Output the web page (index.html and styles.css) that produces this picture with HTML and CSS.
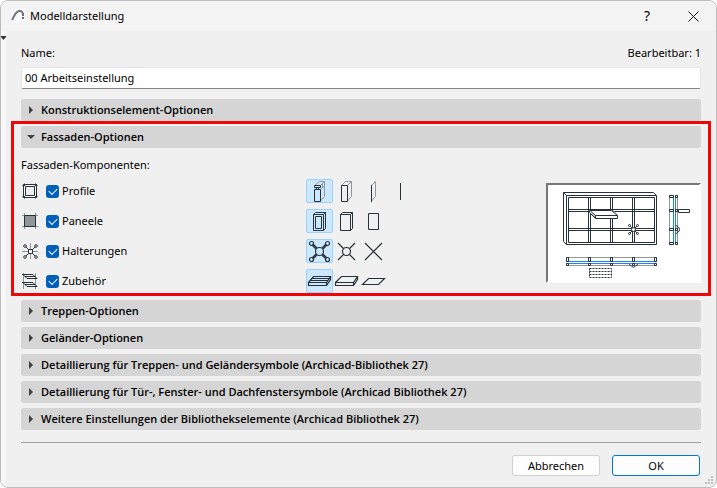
FILE: index.html
```html
<!DOCTYPE html>
<html lang="de">
<head>
    <meta charset="UTF-8">
    <meta name="viewport" content="width=device-width, initial-scale=1.0">
    <title>Modelldarstellung</title>
    <link rel="stylesheet" href="styles.css">
</head>
<body>
    <div class="dialog">
        <header class="titlebar">
            <svg class="app-icon" width="14" height="14" viewBox="0 0 14 14">
                <rect class="tile" width="14" height="14" rx="2"/>
                <path d="M1 11 C3 8 4 3 8 2 Q11 1.500 11.500 4" stroke="#70737d" stroke-width="2"/>
                <path d="M12 4 V7 M12 8 V10" stroke="#6b6e78" stroke-width="2"/>
            </svg>
            <h1>Modelldarstellung</h1>
            <button type="button" class="title-btn help" aria-label="Hilfe">?</button>
            <button type="button" class="title-btn" aria-label="Schließen">
                <svg width="11" height="11" viewBox="0 0 11 11"><path d="M.5 .5 L10.500 10.500 M10.500 .5 L.5 10.500" stroke="#111"/></svg>
            </button>
        </header>

        <div class="body">
            <div class="strip">
                <svg width="5" height="4" viewBox="0 0 5 4"><path class="arrow" d="M0 0 H5 V1 L2.500 4 L0 1 Z"/></svg>
            </div>

            <form class="content">
                <div class="name-row">
                    <label for="name">Name:</label>
                    <span>Bearbeitbar: 1</span>
                </div>
                <input type="text" id="name" class="name-input" value="00 Arbeitseinstellung">

                <details class="panel">
                    <summary>Konstruktionselement-Optionen</summary>
                </details>

                <details class="panel highlight" open>
                    <summary>Fassaden-Optionen</summary>
                    <p class="caption">Fassaden-Komponenten:</p>
                    <div class="facade">
                        <div class="rows">
                            <div class="row">
                                <svg class="part-icon" viewBox="0 0 16 16">
                                    <path class="soft" d="M2.500 0 V16 M13.500 0 V16 M0 2.500 H16 M0 13.500 H16"/>
                                    <path class="paper" d="M1.500 1.500 H14.500 V14.500 H1.500 Z"/>
                                    <path class="face" d="M3.500 3.500 H12.500 V12.500 H3.500 Z"/>
                                    <path d="M1.500 1.500 L3.500 3.500 M14.500 1.500 L12.500 3.500 M1.500 14.500 L3.500 12.500 M14.500 14.500 L12.500 12.500"/>
                                </svg>
                                <label class="check"><input type="checkbox" checked>Profile</label>
                                <div class="levels">
                                    <label class="level"><input type="radio" name="profile" aria-label="Profile detailliert" checked>
                                        <svg viewBox="0 0 27 24">
                                            <path class="soft" d="M8.500 6.500 L13.500 2.500 H18.500 V17.500 L14.500 22 M14.500 6.500 L18.500 2.500 M14.500 10.500 L18.500 7 M16.500 4 V9"/>
                                            <path d="M8.500 6.500 H14.500 V8.500 H8.500 Z M10.500 8.500 V10.500 M12.500 8.500 V10.500 M8.500 10.500 H14.500 V22.500 H8.500 Z"/>
                                        </svg></label>
                                    <label class="level"><input type="radio" name="profile" aria-label="Profile vereinfacht">
                                        <svg viewBox="0 0 27 24">
                                            <path class="soft" d="M8.500 6.500 L12.500 2.500 H18.500 V17.500 L14.500 22 M14.500 6.500 L18.500 2.500"/>
                                            <path d="M8.500 6.500 H14.500 V22.500 H8.500 Z"/>
                                        </svg></label>
                                    <label class="level"><input type="radio" name="profile" aria-label="Profile Fläche">
                                        <svg viewBox="0 0 27 24">
                                            <path class="soft" d="M11.500 6.500 L15.500 2.500 V17.500 L11.500 22"/>
                                            <path d="M11.500 6 V23"/>
                                        </svg></label>
                                    <label class="level"><input type="radio" name="profile" aria-label="Profile Linie">
                                        <svg viewBox="0 0 27 24"><path d="M13.500 4 V21"/></svg></label>
                                </div>
                            </div>

                            <div class="row">
                                <svg class="part-icon" viewBox="0 0 16 16">
                                    <path class="soft" d="M2.500 0 V16 M13.500 0 V16 M0 2.500 H16 M0 13.500 H16"/>
                                    <path class="filled" d="M2.500 2.500 H13.500 V13.500 H2.500 Z"/>
                                </svg>
                                <label class="check"><input type="checkbox" checked>Paneele</label>
                                <div class="levels">
                                    <label class="level"><input type="radio" name="paneele" aria-label="Paneele detailliert" checked>
                                        <svg viewBox="0 0 27 24">
                                            <path d="M7.500 5.500 H17.500 V21.500 H7.500 Z M9.500 7.500 H15.500 V19.500 H9.500 Z M7.500 5.500 L9.500 3.500 H19.500 V19.500 L17.500 21.500 M17.500 5.500 L19.500 3.500"/>
                                        </svg></label>
                                    <label class="level"><input type="radio" name="paneele" aria-label="Paneele vereinfacht">
                                        <svg viewBox="0 0 27 24">
                                            <path d="M7.500 5.500 H17.500 V21.500 H7.500 Z M7.500 5.500 L9.500 3.500 H19.500 V19.500 L17.500 21.500 M17.500 5.500 L19.500 3.500"/>
                                        </svg></label>
                                    <label class="level"><input type="radio" name="paneele" aria-label="Paneele Fläche">
                                        <svg viewBox="0 0 27 24"><path d="M8.500 4.500 H18.500 V20.500 H8.500 Z"/></svg></label>
                                </div>
                            </div>

                            <div class="row">
                                <svg class="part-icon" viewBox="0 0 16 16">
                                    <path class="soft" d="M8.500 0 V16 M0 8.500 H16"/>
                                    <path d="M3.500 3.500 L13.500 13.500 M13.500 3.500 L3.500 13.500"/>
                                    <path class="paper" d="M6.500 6.500 H10.500 V10.500 H6.500 Z"/>
                                    <g class="paper"><circle cx="3" cy="3" r="1.300"/><circle cx="14" cy="3" r="1.300"/><circle cx="3" cy="14" r="1.300"/><circle cx="14" cy="14" r="1.300"/></g>
                                </svg>
                                <label class="check"><input type="checkbox" checked>Halterungen</label>
                                <div class="levels">
                                    <label class="level"><input type="radio" name="halter" aria-label="Halterungen detailliert" checked>
                                        <svg class="bold" viewBox="0 0 27 24">
                                            <path d="M6 6 L10 10 M7 5 L11 9 M21 6 L17 10 M20 5 L16 9 M6 19 L10 15 M7 20 L11 16 M21 19 L17 15 M20 20 L16 16"/>
                                            <circle cx="13.500" cy="12.500" r="4"/>
                                            <circle cx="5.500" cy="4.500" r="2"/><circle cx="21.500" cy="4.500" r="2"/><circle cx="5.500" cy="20.500" r="2"/><circle cx="21.500" cy="20.500" r="2"/>
                                        </svg></label>
                                    <label class="level"><input type="radio" name="halter" aria-label="Halterungen vereinfacht">
                                        <svg class="bold" viewBox="0 0 27 24">
                                            <path d="M5 4 L11 10 M22 4 L16 10 M5 21 L11 15 M22 21 L16 15"/>
                                            <circle cx="13.500" cy="12.500" r="4"/>
                                        </svg></label>
                                    <label class="level"><input type="radio" name="halter" aria-label="Halterungen Linien">
                                        <svg class="bold" viewBox="0 0 27 24"><path d="M5 4 L22 21 M22 4 L5 21"/></svg></label>
                                </div>
                            </div>

                            <div class="row">
                                <svg class="part-icon" viewBox="0 0 16 16">
                                    <path class="soft" d="M1.500 0 V16 M13.500 0 V16"/>
                                    <path d="M0 1.500 H11 L15 5.500 H5 L1 1.500 M3 3.500 H13 M0 9.500 H11 L15 13.500 H5 L1 9.500 M3 11.500 H13"/>
                                </svg>
                                <label class="check"><input type="checkbox" checked>Zubehör</label>
                                <div class="levels">
                                    <label class="level"><input type="radio" name="zubehoer" aria-label="Zubehör detailliert" checked>
                                        <svg class="bold" viewBox="0 0 27 24">
                                            <path d="M2.500 13.500 H20.500 V16.500 H2.500 Z M2.500 13.500 L7.500 7.500 H24.500 L20.500 13.500 M24.500 7.500 V10.500 L20.500 16.500 M6 9.500 H22.500 M4 11.500 H21.500"/>
                                        </svg></label>
                                    <label class="level"><input type="radio" name="zubehoer" aria-label="Zubehör vereinfacht">
                                        <svg class="bold" viewBox="0 0 27 24">
                                            <path d="M2.500 13.500 H20.500 V16.500 H2.500 Z M2.500 13.500 L8.500 7.500 H24.500 L20.500 13.500 M24.500 7.500 V10.500 L20.500 16.500"/>
                                        </svg></label>
                                    <label class="level"><input type="radio" name="zubehoer" aria-label="Zubehör Fläche">
                                        <svg class="bold" viewBox="0 0 27 24"><path d="M2.500 15.500 L8.500 9.500 H24.500 L18.500 15.500 Z"/></svg></label>
                                </div>
                            </div>
                        </div>

                        <div class="preview">
                            <svg width="151" height="96" viewBox="0 0 151 96">
                                <!-- elevation -->
                                <path d="M18.500 10.500 L15.500 7.500 H105.500 L108.500 10.500 M15.500 7.500 V56.500 L18.500 59.500 M18.500 10.500 H108.500 V59.500 H18.500 Z M20.500 12.500 H106.500 V57.500 H20.500 Z"/>
                                <path d="M40.500 12.500 V57.500 M42.500 12.500 V57.500 M62.500 12.500 V57.500 M64.500 12.500 V57.500 M84.500 12.500 V57.500 M86.500 12.500 V57.500 M20.500 24.500 H106.500 M20.500 26.500 H106.500 M20.500 43.500 H106.500 M20.500 45.500 H106.500"/>
                                <path class="paper" d="M41.500 25.500 H63.500 L69.500 30.500 V33.500 H47.500 L41.500 27.500 Z"/>
                                <path d="M42.500 26 L47.500 30.500 H69.500 M47.500 30.500 V33.500"/>
                                <path class="soft" d="M43 27 L47 32 M64.500 25 L68 28.500"/>
                                <path d="M81.500 40.500 L89.500 48.500 M89.500 40.500 L81.500 48.500"/>
                                <g class="paper"><circle cx="85.500" cy="44.500" r="2"/><circle cx="81.500" cy="40.500" r="1"/><circle cx="89.500" cy="40.500" r="1"/><circle cx="81.500" cy="48.500" r="1"/><circle cx="89.500" cy="48.500" r="1"/></g>
                                <!-- vertical section -->
                                <path class="soft" d="M121.500 10.500 V59.500 M129.500 10.500 V59.500"/>
                                <path class="glass" d="M125.500 10.500 V59.500 M127.500 10.500 V59.500"/>
                                <path d="M121.500 10.500 h4 v2 h-4 z m6 0 h2 v2 h-2 z M121.500 24.500 h4 v2 h-4 z m6 0 h2 v2 h-2 z M121.500 43.500 h4 v2 h-4 z m6 0 h2 v2 h-2 z M121.500 57.500 h4 v2 h-4 z m6 0 h2 v2 h-2 z M130.500 24.500 h11 v3 h-11 z"/>
                                <path d="M128.500 40 L129.500 42 Q131.500 42 131.500 44.500 Q131.500 47 129.500 47 L128.500 49"/>
                                <!-- plan -->
                                <path class="soft" d="M18.500 72.500 H108.500 M18.500 80.500 H108.500"/>
                                <path class="glass" d="M18.500 76.500 H108.500 M18.500 78.500 H108.500"/>
                                <path d="M18.500 72.500 h2 v4 h-2 z m0 6 h2 v2 h-2 z M40.500 72.500 h2 v4 h-2 z m0 6 h2 v2 h-2 z M62.500 72.500 h2 v4 h-2 z m0 6 h2 v2 h-2 z M84.500 72.500 h2 v4 h-2 z m0 6 h2 v2 h-2 z M106.500 72.500 h2 v4 h-2 z m0 6 h2 v2 h-2 z"/>
                                <path d="M81 79.500 L83 80.500 Q85.500 84 88 80.500 L90 79.500"/>
                                <path stroke-dasharray="2 1" d="M41.500 83.500 H63.500 V92.500 H41.500 Z M41.500 86.500 H63.500 M41.500 89.500 H63.500"/>
                            </svg>
                        </div>
                    </div>
                </details>

                <details class="panel">
                    <summary>Treppen-Optionen</summary>
                </details>
                <details class="panel">
                    <summary>Geländer-Optionen</summary>
                </details>
                <details class="panel">
                    <summary>Detaillierung für Treppen- und Geländersymbole (Archicad-Bibliothek 27)</summary>
                </details>
                <details class="panel">
                    <summary>Detaillierung für Tür-, Fenster- und Dachfenstersymbole (Archicad Bibliothek 27)</summary>
                </details>
                <details class="panel">
                    <summary>Weitere Einstellungen der Bibliothekselemente (Archicad Bibliothek 27)</summary>
                </details>

                <div class="actions">
                    <button type="button" class="btn">Abbrechen</button>
                    <button type="submit" class="btn primary">OK</button>
                </div>
            </form>
        </div>

        <svg class="grip" width="8" height="8" viewBox="0 0 8 8">
            <path d="M6 0h2v2h-2z M3 3h2v2h-2z M6 3h2v2h-2z M0 6h2v2h-2z M3 6h2v2h-2z M6 6h2v2h-2z"/>
        </svg>
    </div>
</body>
</html>
```

FILE: styles.css
```css
* {
    margin: 0;
    padding: 0;
    box-sizing: border-box;
}

body {
    font-family: 'Noto Sans', 'Open Sans', sans-serif;
    font-size: 11px;
    line-height: 16px;
    color: #000;
    background: #fff;
}

button,
input {
    font: inherit;
    color: inherit;
}

.dialog {
    position: relative;
    display: flex;
    flex-direction: column;
    min-height: 100vh;
    background: #f0f0f0;
    border: 1px solid #bdbdbd;
    border-radius: 8px;
    overflow: hidden;
}

/* Title bar */
.titlebar {
    display: flex;
    align-items: center;
    height: 30px;
    padding: 0 0 0 10px;
    background: #f3f3f3;
}

.app-icon {
    margin-right: 5px;
}

h1 {
    flex: 1;
    font-size: 11px;
    font-weight: 400;
}

.title-btn {
    display: flex;
    align-items: center;
    justify-content: center;
    width: 46px;
    height: 30px;
    border: none;
    background: none;
}

.help {
    font-size: 14px;
}

.body {
    flex: 1;
    display: flex;
}

.strip {
    width: 5px;
    padding-top: 5px;
    background: #f8f8f8;
    line-height: 0;
}

.content {
    flex: 1;
    padding: 14px 15px 11px;
}

.name-row {
    display: flex;
    justify-content: space-between;
}

.name-input {
    display: block;
    width: 100%;
    height: 22px;
    margin: 6px 0 10px;
    padding: 0 3px 2px;
    border: 1px solid #e5e5e5;
    border-bottom-color: #868686;
    border-radius: 2px;
    background: #fff;
    outline: none;
}

/* Collapsible panels */
.panel {
    margin-bottom: 5px;
}

.panel summary {
    display: flex;
    align-items: center;
    height: 22px;
    padding-left: 8px;
    border-radius: 3px;
    background: #d5d5d5;
    font-family: 'Open Sans', 'Noto Sans', sans-serif;
    font-weight: 600;
    list-style: none;
}

.panel summary::before {
    content: '';
    width: 4px;
    height: 8px;
    margin-right: 8px;
    background: #404040;
    clip-path: polygon(0 0, 100% 50%, 0 100%);
}

.panel[open] summary::before {
    width: 8px;
    height: 4px;
    margin: 0 6px 0 -2px;
    clip-path: polygon(0 0, 100% 0, 50% 100%);
}

.highlight {
    margin: -5px -10px 4px;
    padding: 2px 7px 0;
    border: 3px solid #ed0707;
}

.caption {
    margin: 9px 0 3px;
}

.facade {
    display: flex;
    justify-content: space-between;
    align-items: flex-start;
}

.row {
    display: grid;
    grid-template-columns: 24px 261px auto;
    align-items: center;
    height: 30px;
}

.rows {
    height: 117px;
}

/* Icons */
svg {
    fill: none;
    stroke: none;
}

.part-icon,
.level svg,
.preview svg {
    stroke: #263238;
}

.level .bold {
    stroke-width: 1.2;
}

.soft {
    stroke: #90979b;
}

.glass {
    stroke: #2080ff;
}

.paper {
    fill: #fff;
}

.face {
    fill: #f0f0f0;
}

.filled {
    fill: #919699;
}

.tile {
    fill: #f9f9fb;
}

.arrow {
    fill: #333;
}

.part-icon {
    width: 16px;
    height: 16px;
    margin-left: 1px;
}

.check {
    display: flex;
    align-items: center;
    gap: 3px;
    padding-left: 1px;
}

.check input {
    appearance: none;
    width: 13px;
    height: 13px;
    border-radius: 3px;
    background: #005fb8;
    display: grid;
    place-items: center;
}

.check input:checked::before {
    content: '';
    width: 7px;
    height: 4px;
    margin-bottom: 2px;
    border-left: 1px solid #fff;
    border-bottom: 1px solid #fff;
    transform: rotate(-45deg);
}

.levels {
    display: flex;
}

.level {
    position: relative;
    width: 27px;
    height: 24px;
}

.level input {
    appearance: none;
    position: absolute;
    inset: 0;
    border-radius: 2px;
}

.level input:checked {
    border: 1px solid #99d1ff;
    background: #cce8ff;
}

.level svg {
    position: relative;
    display: block;
    pointer-events: none;
}

.preview {
    margin-top: 7px;
    border: 2px solid;
    border-color: #777 #fff #fff #777;
    background: #fff;
    line-height: 0;
}

/* Footer */
.actions {
    display: flex;
    justify-content: flex-end;
    gap: 12px;
    margin-top: 12px;
    padding: 12px 1px 0 0;
    border-top: 1px solid #a0a0a0;
}

.btn {
    width: 88px;
    height: 21px;
    border: 1px solid #d0d0d0;
    border-radius: 3px;
    background: #fdfdfd;
}

.btn.primary {
    border-color: #0078d4;
}

.grip {
    position: absolute;
    right: 3px;
    bottom: 3px;
    fill: #bfbfbf;
}
```
